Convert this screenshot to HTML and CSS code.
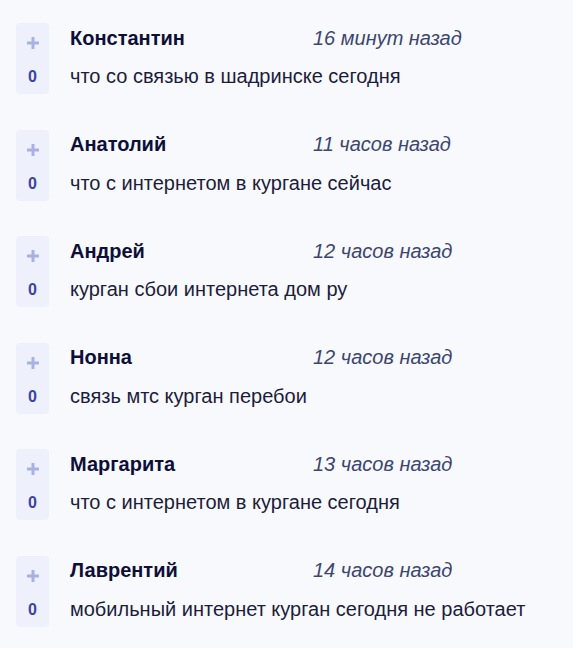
FILE: index.html
```html
<!DOCTYPE html>
<html lang="ru">
<head>
<meta charset="utf-8">
<link rel="stylesheet" href="styles.css">
</head>
<body>
<div class="list">
  <div class="item">
    <div class="vote"><svg class="plus" viewBox="0 0 14 14" width="14" height="14"><path d="M7 1v12M1 7h12" stroke="currentColor" stroke-width="3"/></svg><span class="count">0</span></div>
    <div class="body">
      <div class="head"><span class="name">Константин</span><span class="time">16 минут назад</span></div>
      <div class="text">что со связью в шадринске сегодня</div>
    </div>
  </div>
  <div class="item">
    <div class="vote"><svg class="plus" viewBox="0 0 14 14" width="14" height="14"><path d="M7 1v12M1 7h12" stroke="currentColor" stroke-width="3"/></svg><span class="count">0</span></div>
    <div class="body">
      <div class="head"><span class="name">Анатолий</span><span class="time">11 часов назад</span></div>
      <div class="text">что с интернетом в кургане сейчас</div>
    </div>
  </div>
  <div class="item">
    <div class="vote"><svg class="plus" viewBox="0 0 14 14" width="14" height="14"><path d="M7 1v12M1 7h12" stroke="currentColor" stroke-width="3"/></svg><span class="count">0</span></div>
    <div class="body">
      <div class="head"><span class="name">Андрей</span><span class="time">12 часов назад</span></div>
      <div class="text">курган сбои интернета дом ру</div>
    </div>
  </div>
  <div class="item">
    <div class="vote"><svg class="plus" viewBox="0 0 14 14" width="14" height="14"><path d="M7 1v12M1 7h12" stroke="currentColor" stroke-width="3"/></svg><span class="count">0</span></div>
    <div class="body">
      <div class="head"><span class="name">Нонна</span><span class="time">12 часов назад</span></div>
      <div class="text">связь мтс курган перебои</div>
    </div>
  </div>
  <div class="item">
    <div class="vote"><svg class="plus" viewBox="0 0 14 14" width="14" height="14"><path d="M7 1v12M1 7h12" stroke="currentColor" stroke-width="3"/></svg><span class="count">0</span></div>
    <div class="body">
      <div class="head"><span class="name">Маргарита</span><span class="time">13 часов назад</span></div>
      <div class="text">что с интернетом в кургане сегодня</div>
    </div>
  </div>
  <div class="item">
    <div class="vote"><svg class="plus" viewBox="0 0 14 14" width="14" height="14"><path d="M7 1v12M1 7h12" stroke="currentColor" stroke-width="3"/></svg><span class="count">0</span></div>
    <div class="body">
      <div class="head"><span class="name">Лаврентий</span><span class="time">14 часов назад</span></div>
      <div class="text">мобильный интернет курган сегодня не работает</div>
    </div>
  </div>
</div>
</body>
</html>
```

FILE: styles.css
```css
html, body {
  margin: 0;
  padding: 0;
  background: #f8f9fc;
}
body {
  font-family: "Liberation Sans", Arial, sans-serif;
  color: #1c1d3c;
}
.list {
  padding: 23px 0 0 16px;
  display: flex;
  flex-direction: column;
  gap: 35.6px;
}
.item {
  display: flex;
  gap: 21px;
}
.vote {
  width: 33px;
  height: 71px;
  box-sizing: border-box;
  background: #eef0fb;
  border-radius: 4px;
  display: flex;
  flex-direction: column;
  align-items: center;
  padding-top: 13px;
}
.plus {
  color: #a9b1e2;
  display: block;
}
.count {
  margin-top: 18px;
  font-size: 16px;
  font-weight: bold;
  line-height: 18px;
  color: #3a43a6;
}
.body {
  padding-top: 3px;
}
.head {
  display: flex;
  height: 24px;
  align-items: center;
}
.name {
  width: 243px;
  font-size: 20px;
  font-weight: bold;
  color: #0e0f38;
}
.time {
  font-size: 20px;
  font-style: italic;
  color: #3c4670;
}
.text {
  margin-top: 14px;
  font-size: 20px;
  line-height: 24px;
  color: #1c1d3c;
}
```
